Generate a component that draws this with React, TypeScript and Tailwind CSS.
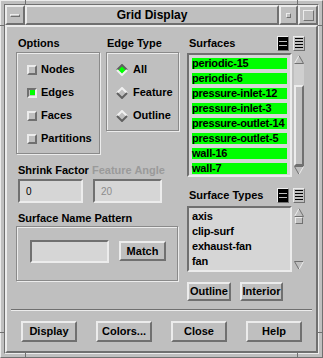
import { ReactNode } from 'react';

const raised = 'border-t-[#ececec] border-l-[#ececec] border-b-[#707070] border-r-[#707070]';
const sunken = 'border-t-[#707070] border-l-[#707070] border-b-[#ececec] border-r-[#ececec]';
const etched = 'border border-[#8a8a8a] shadow-[1px_1px_0_#ececec,inset_1px_1px_0_#ececec]';

const surfaces = [
  'periodic-15',
  'periodic-6',
  'pressure-inlet-12',
  'pressure-inlet-3',
  'pressure-outlet-14',
  'pressure-outlet-5',
  'wall-16',
  'wall-7'
];

const surfaceTypes = ['axis', 'clip-surf', 'exhaust-fan', 'fan'];

function CheckBox({ on }: { on?: boolean }) {
  return (
    <span
      className={`flex items-center justify-center w-[10px] h-[10px] border-2 ${on ? sunken : raised} bg-[#bfbfbf]`}
    >
      {on && <span className="w-[5px] h-[5px] bg-[#00ff00]" />}
    </span>
  );
}

function Diamond({ on }: { on?: boolean }) {
  const top = on ? '#606060' : '#f0f0f0';
  const bottom = on ? '#f0f0f0' : '#606060';
  return (
    <svg width="12" height="12" viewBox="0 0 12 12">
      <polygon points="6,1 11,6 6,11 1,6" fill={on ? '#00ff00' : '#bfbfbf'} />
      <polyline points="1,6 6,1 11,6" fill="none" stroke={top} strokeWidth="2" />
      <polyline points="1,6 6,11 11,6" fill="none" stroke={bottom} strokeWidth="2" />
    </svg>
  );
}

function Label({ children, className = '' }: { children: ReactNode; className?: string }) {
  return <div className={`h-[16px] leading-[16px] text-[11px] font-bold ${className}`}>{children}</div>;
}

function Button({ children, className = '' }: { children: ReactNode; className?: string }) {
  return (
    <div
      className={`flex items-center justify-center border-2 ${raised} bg-[#bfbfbf] text-[11px] font-bold leading-none ${className}`}
    >
      {children}
    </div>
  );
}

function ListIcons() {
  return (
    <div className="flex gap-[4px]">
      <div className={`w-[12px] h-[15px] border ${raised} bg-black flex flex-col justify-between py-[1px] px-[1px]`}>
        <span className="h-[1px] bg-[#bfbfbf] mt-[3px]" />
        <span className="h-[1px] bg-[#bfbfbf] mb-[3px]" />
      </div>
      <div className={`w-[12px] h-[15px] border ${raised} bg-[#bfbfbf] flex flex-col justify-between py-[1px] px-[1px]`}>
        <span className="h-[1px] bg-black" />
        <span className="h-[1px] bg-black" />
        <span className="h-[1px] bg-black" />
        <span className="h-[1px] bg-black" />
      </div>
    </div>
  );
}

function Arrow({ down }: { down?: boolean }) {
  return (
    <svg width="10" height="9" viewBox="0 0 10 9" className="mx-auto">
      {down ? (
        <>
          <polygon points="0.5,0.5 9.5,0.5 5,8.5" fill="#bfbfbf" />
          <polyline points="0.5,0.5 9.5,0.5" fill="none" stroke="#707070" />
          <polyline points="0.5,0.5 5,8.5" fill="none" stroke="#707070" />
          <polyline points="9.5,0.5 5,8.5" fill="none" stroke="#ececec" />
        </>
      ) : (
        <>
          <polygon points="5,0.5 9.5,8.5 0.5,8.5" fill="#bfbfbf" />
          <polyline points="5,0.5 0.5,8.5" fill="none" stroke="#ececec" />
          <polyline points="5,0.5 9.5,8.5 0.5,8.5" fill="none" stroke="#707070" />
        </>
      )}
    </svg>
  );
}

function ScrollBar({ big }: { big?: boolean }) {
  return (
    <div className="w-[12px] h-full flex flex-col py-[2px] bg-[#bfbfbf]">
      <Arrow />
      {big ? (
        <>
          <div className="h-[21px] bg-[#cfcfcf] mx-[1px]" />
          <div className={`flex-1 border-2 ${raised} bg-[#bfbfbf] mx-[1px]`} />
        </>
      ) : (
        <>
          <div className={`h-[7px] border ${raised} bg-[#bfbfbf] mx-[2px]`} />
          <div className="flex-1" />
        </>
      )}
      <Arrow down />
    </div>
  );
}

export default function App() {
  return (
    <div className="w-[323px] h-[358px] bg-[#bfbfbf] text-black font-['Liberation_Sans',Arial,sans-serif] relative">
      <div className={`w-full h-full border ${raised} p-[3px]`}>
        <div className={`w-full h-full border ${sunken} flex flex-col`}>
          {/* title bar */}
          <div className="h-[20px] flex">
            <div className={`w-[20px] border-2 ${raised} flex items-center justify-center`}>
              <span className={`w-[10px] h-[3px] border ${raised}`} />
            </div>
            <div className={`flex-1 border-2 ${raised} flex items-center justify-center text-[12px] font-bold`}>
              Grid Display
            </div>
            <div className={`w-[19px] border-2 ${raised} flex items-center justify-center`}>
              <span className={`w-[5px] h-[5px] border ${raised}`} />
            </div>
            <div className={`w-[20px] border-2 ${raised} flex items-center justify-center`}>
              <span className={`w-[11px] h-[11px] border ${raised}`} />
            </div>
          </div>

          {/* client area */}
          <div className={`flex-1 border-2 ${raised} flex flex-col`}>
            <div className="flex gap-[8px] pl-[9px] pt-[8px]">
              {/* left column */}
              <div className="w-[163px] flex flex-col">
                <div className="flex gap-[6px] items-start">
                  <div className="w-[84px]">
                    <Label className="pl-[2px]">Options</Label>
                    <div className={`mt-[1px] h-[102px] ${etched} pl-[10px] pt-[5px]`}>
                      {['Nodes', 'Edges', 'Faces', 'Partitions'].map((t) => (
                        <div key={t} className="h-[23px] flex items-center gap-[4px] text-[11px] font-bold">
                          <CheckBox on={t === 'Edges'} />
                          {t}
                        </div>
                      ))}
                    </div>
                  </div>
                  <div className="w-[73px]">
                    <Label className="pl-[1px]">Edge Type</Label>
                    <div className={`mt-[1px] h-[79px] ${etched} pl-[9px] pt-[5px]`}>
                      {['All', 'Feature', 'Outline'].map((t) => (
                        <div key={t} className="h-[23px] flex items-center gap-[5px] text-[11px] font-bold">
                          <Diamond on={t === 'All'} />
                          {t}
                        </div>
                      ))}
                    </div>
                  </div>
                </div>

                <div className="flex mt-[8px]">
                  <div className="w-[76px]">
                    <Label className="pl-[2px]">Shrink Factor</Label>
                    <div className={`ml-[2px] mt-[1px] w-[65px] h-[24px] border-2 ${sunken} bg-[#d6d6d6] flex items-center pl-[6px] text-[10px]`}>
                      0
                    </div>
                  </div>
                  <div className="w-[80px]">
                    <Label className="text-[#9a9a9a]">Feature Angle</Label>
                    <div className={`ml-[1px] mt-[1px] w-[69px] h-[24px] border-2 ${sunken} bg-[#d6d6d6] flex items-center pl-[6px] text-[10px] text-[#8c8c8c]`}>
                      20
                    </div>
                  </div>
                </div>

                <Label className="mt-[7px] pl-[2px]">Surface Name Pattern</Label>
                <div className={`w-[162px] h-[55px] ${etched} flex items-start pl-[13px] pt-[13px] gap-[10px]`}>
                  <div className={`w-[79px] h-[23px] border-2 ${sunken} bg-[#d6d6d6]`} />
                  <Button className="w-[47px] h-[20px] mt-[1px]">Match</Button>
                </div>
              </div>

              {/* right column */}
              <div className="w-[118px] flex flex-col">
                <div className="h-[16px] flex items-center justify-between">
                  <span className="pl-[2px] text-[11px] font-bold">Surfaces</span>
                  <ListIcons />
                </div>
                <div className="mt-[2px] h-[124px] flex gap-[1px]">
                  <div className={`w-[105px] h-full border-2 ${sunken} bg-[#d6d6d6] p-[3px] overflow-hidden`}>
                    {surfaces.map((s) => (
                      <div key={s} className="h-[11px] mb-[4px] bg-[#00ff00] text-[11px] font-bold leading-[11px] tracking-[-0.2px] whitespace-nowrap">
                        {s}
                      </div>
                    ))}
                  </div>
                  <ScrollBar big />
                </div>

                <div className="mt-[10px] h-[16px] flex items-center justify-between">
                  <span className="pl-[2px] text-[11px] font-bold">Surface Types</span>
                  <ListIcons />
                </div>
                <div className="mt-[3px] h-[66px] flex gap-[1px]">
                  <div className={`w-[105px] h-full border-2 ${sunken} bg-[#d6d6d6] p-[3px] overflow-hidden`}>
                    {surfaceTypes.map((s) => (
                      <div key={s} className="h-[11px] mb-[4px] text-[11px] font-bold leading-[11px] tracking-[-0.2px] whitespace-nowrap">
                        {s}
                      </div>
                    ))}
                  </div>
                  <ScrollBar />
                </div>

                <div className="mt-[10px] flex gap-[9px]">
                  <Button className="w-[44px] h-[19px]">Outline</Button>
                  <Button className="w-[43px] h-[19px]">Interior</Button>
                </div>
              </div>
            </div>

            <div className="mt-[8px] mx-[4px] h-[2px] border-t border-t-[#707070] border-b border-b-[#ececec]" />

            <div className="mt-[10px] pl-[14px] flex gap-[19px]">
              {['Display', 'Colors...', 'Close', 'Help'].map((b) => (
                <Button key={b} className="w-[56px] h-[21px]">
                  {b}
                </Button>
              ))}
            </div>
          </div>
        </div>
      </div>

      {/* resize handle notches on the frame */}
      <span className="absolute left-[25px] top-0 w-[1px] h-[5px] bg-[#707070]" />
      <span className="absolute left-[297px] top-0 w-[1px] h-[5px] bg-[#707070]" />
      <span className="absolute left-[25px] bottom-0 w-[1px] h-[5px] bg-[#707070]" />
      <span className="absolute left-[297px] bottom-0 w-[1px] h-[5px] bg-[#707070]" />
      <span className="absolute left-0 top-[25px] w-[5px] h-[1px] bg-[#707070]" />
      <span className="absolute right-0 top-[25px] w-[5px] h-[1px] bg-[#707070]" />
      <span className="absolute left-0 top-[332px] w-[5px] h-[1px] bg-[#707070]" />
      <span className="absolute right-0 top-[332px] w-[5px] h-[1px] bg-[#707070]" />
    </div>
  );
}
